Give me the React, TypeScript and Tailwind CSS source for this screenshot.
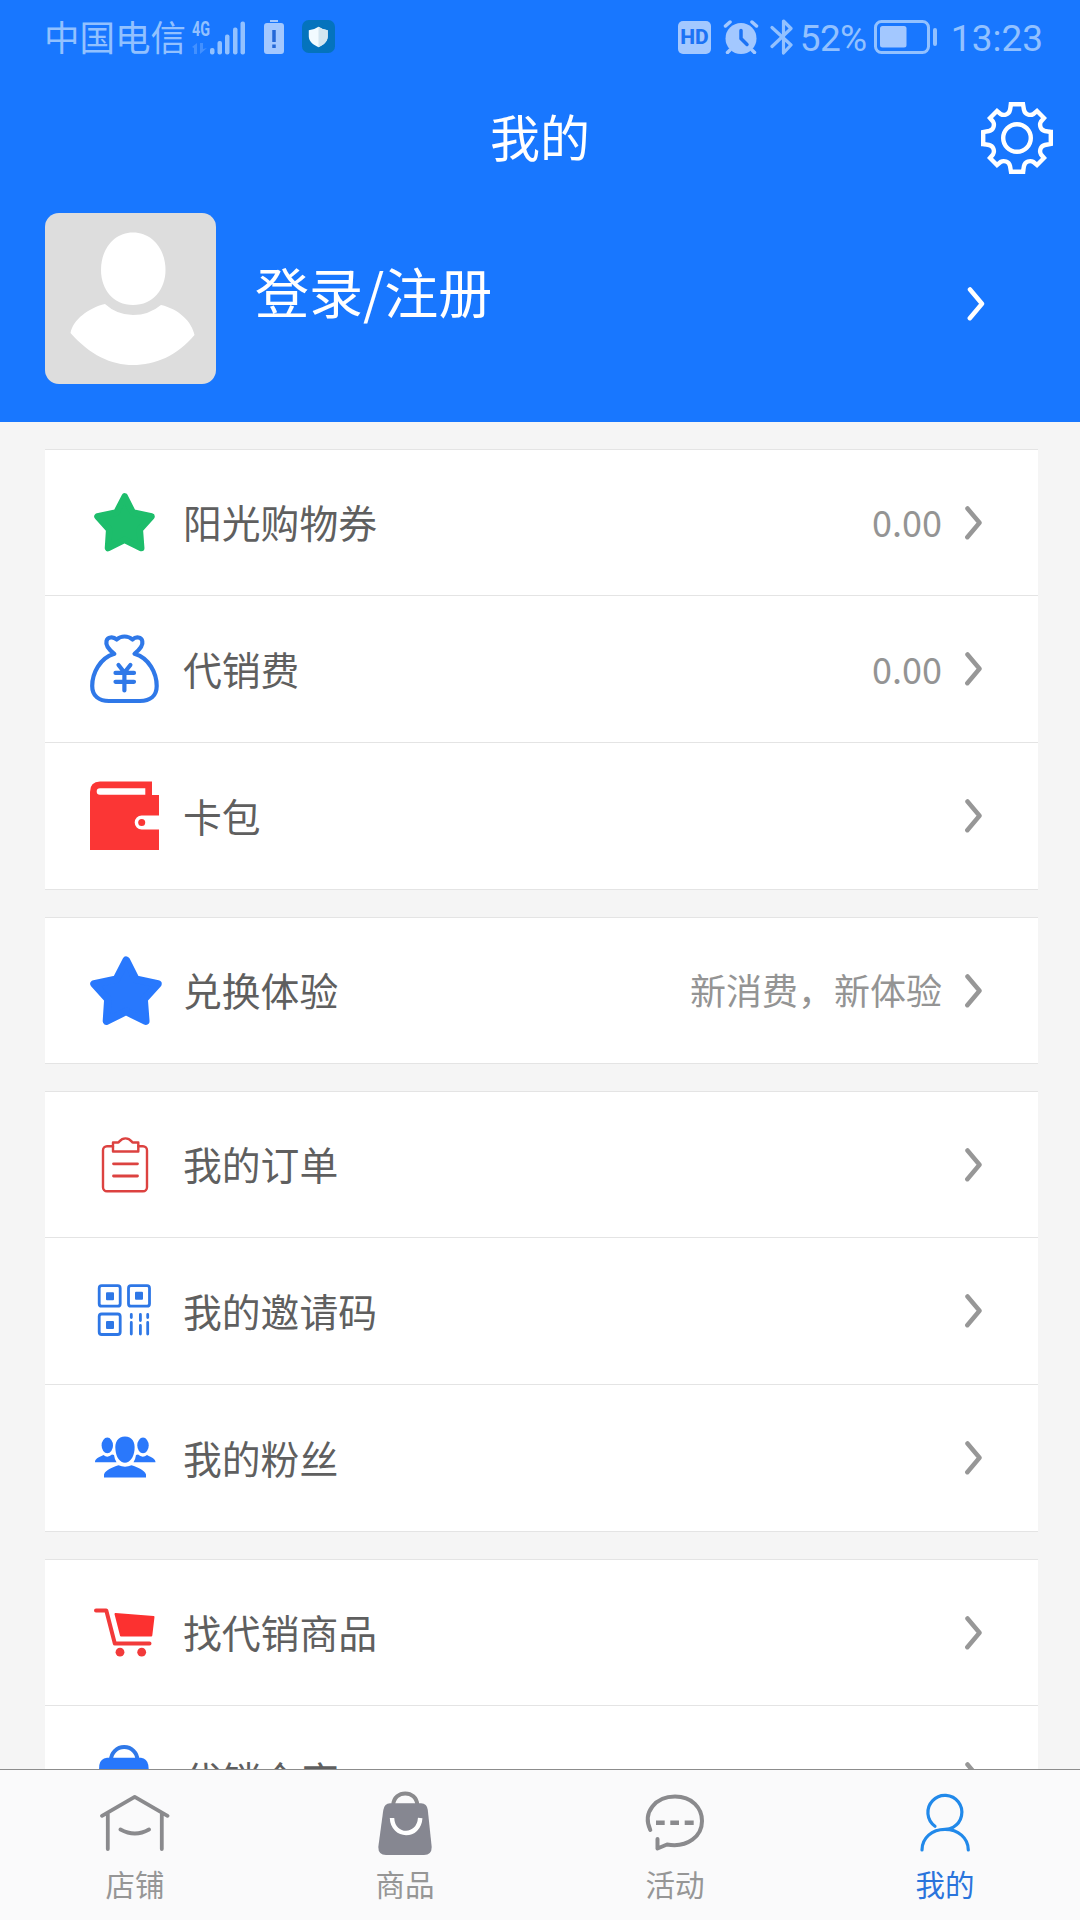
import React from "react";

type RowItem = {
  label: string;
  icon: React.ReactNode;
  value?: string;
};

const Star = ({ className }: { className: string }) => (
  <svg viewBox="4 5 61 59" className={className} fill="currentColor" stroke="currentColor" strokeWidth="6.5" strokeLinejoin="round">
    <path d="M34.7 8.5L42.8 24.5L61.5 28.5L49.8 41.5L51.2 60L34.5 51.8L18 60L19.2 41.5L7.5 28.5L26.4 24.5Z" />
  </svg>
);

const MoneyBag = () => (
  <svg viewBox="0 0 70 70" className="size-[70px] shrink-0 text-[#2f78e8]" fill="none" stroke="currentColor" strokeWidth="4.2" strokeLinecap="round" strokeLinejoin="round">
    <path d="M24.3 19.8C18 15 15.5 11 16.5 7C17.5 3 23 2.2 26.7 5.5C31 1.5 38 1.5 42.5 5.5C46 2.2 51.5 3 52.3 7C53.2 11 50.5 15 44.5 19.8C59 24 66.7 39 66.7 52C66.7 62 60 67 50 67H19C9 67 2.2 62 2.2 52C2.2 39 10 24 24.3 19.8" />
    <path d="M28.5 31L34.4 38.5L40.4 31M34.4 38.5V56.5M25.5 38.9H44M25.5 47.8H44" />
  </svg>
);

const Wallet = () => (
  <svg viewBox="0 0 70 70" className="size-[70px] shrink-0">
    <path fill="#fb3635" d="M0 11Q0 .5 10 .5H62V14H69V34.5H51.7A7 7 0 0 0 51.7 48.5H69V69H0Z" />
    <path fill="#fff" d="M10 7.2H55.3V13.8H10A3.3 3.3 0 0 1 10 7.2Z" />
    <circle cx="51.7" cy="41.5" r="3.5" fill="#fb3635" />
  </svg>
);

const Clipboard = () => (
  <svg viewBox="0 0 70 70" className="size-[70px] shrink-0 text-[#dc4240]" fill="none" stroke="currentColor" strokeWidth="2.4" strokeLinecap="round" strokeLinejoin="round">
    <path d="M23 16.2H17A4 4 0 0 0 13 20.2V57.2A4 4 0 0 0 17 61.2H53A4 4 0 0 0 57 57.2V20.2A4 4 0 0 0 53 16.2H48.3" />
    <path d="M23 12.5H28C29.5 12.5 30 8.4 35.5 8.4S41.5 12.5 43 12.5H48.3V21.5H23Z" />
    <path d="M23.5 33.8H47.5M23.5 46H47.5" strokeWidth="2.8" />
  </svg>
);

const QrCode = () => (
  <svg viewBox="0 0 70 70" className="size-[70px] shrink-0 text-[#2e77e6]" fill="none" stroke="currentColor" strokeWidth="2.8">
    <rect x="9.2" y="9.7" width="21" height="20.5" rx="2.5" />
    <rect x="38.5" y="9.7" width="21" height="20.5" rx="2.5" />
    <rect x="9.2" y="38" width="21" height="20.5" rx="2.5" />
    <g fill="currentColor" stroke="none">
      <rect x="16" y="16.3" width="8" height="8" rx="1" />
      <rect x="45" y="15.8" width="8" height="8" rx="1" />
      <rect x="16" y="45" width="8" height="8" rx="1" />
    </g>
    <path strokeLinecap="round" d="M41.3 38.5V41.5M41.3 46.5V58M50.4 38.5V44.5M50.4 49.5V58M57.7 38.5V41.5M57.7 46.5V58" />
  </svg>
);

const Fans = () => (
  <svg viewBox="0 0 70 70" className="size-[70px] shrink-0" fill="#2a78fb">
    <ellipse cx="17.3" cy="22.4" rx="5.7" ry="7.8" />
    <ellipse cx="53" cy="22.4" rx="5.7" ry="7.8" />
    <path d="M5 39.2C5 36 8 34.5 13.5 32Q17.5 35.5 22 31.5L24 32Q24.5 36 26.5 39.2Z" />
    <path d="M65.5 39.2C65.5 36 62 34.5 57 32Q52.5 35.5 48 31.5L46 32Q45.5 36 43.5 39.2Z" />
    <path d="M35 13.5C42 13.5 45.5 19 44.5 27C43.8 34 40 39.8 35 39.8S26 34 25.5 27C24.5 19 28 13.5 35 13.5Z" />
    <path d="M14 54.5V51.5C15.5 47 22 44.5 28.5 42.3Q35 45 41.5 42.3C48 44.5 54.5 47 56 51.5V54.5Z" />
  </svg>
);

const Cart = () => (
  <svg viewBox="0 0 70 70" className="size-[70px] shrink-0 text-[#f23a3a]">
    <path fill="none" stroke="currentColor" strokeWidth="4" strokeLinecap="round" strokeLinejoin="round" d="M6 12.6H16.3L24.8 45.4H59.5" />
    <path fill="#fc3130" stroke="#fc3130" strokeWidth="2" strokeLinejoin="round" d="M25.5 16L63.5 19L61.3 37.5H31Z" />
    <circle cx="30" cy="54.2" r="4.4" fill="currentColor" />
    <circle cx="51.7" cy="54.2" r="4.4" fill="currentColor" />
  </svg>
);

const Depot = () => (
  <svg viewBox="0 0 70 70" className="size-[70px] shrink-0">
    <path fill="none" stroke="#2f78e8" strokeWidth="4" d="M21 16A13.2 13 0 0 1 47.4 16" />
    <path fill="#2777fb" d="M17 13.8H51Q57 14.5 58.3 21L62 60Q62 67 55 67H14Q7 67 7 60L9.3 21Q10.5 14.500 17 13.8Z" />
  </svg>
);

const Chevron = ({ className }: { className: string }) => (
  <svg viewBox="0 0 17 34" className={className} fill="none" stroke="currentColor" strokeLinecap="round" strokeLinejoin="round">
    <path d="M2.5 2.500L14.500 16.800L2.300 31.200" />
  </svg>
);

const groups: RowItem[][] = [
  [
    { label: "阳光购物券", icon: <Star className="w-[61px] h-[59px] shrink-0 mr-[2px] text-[#1dbd6b]" />, value: "0.00" },
    { label: "代销费", icon: <MoneyBag />, value: "0.00" },
    { label: "卡包", icon: <Wallet /> },
  ],
  [{ label: "兑换体验", icon: <Star className="w-[72px] h-[70px] shrink-0 ml-[2px] text-[#2878fd]" />, value: "新消费，新体验" }],
  [
    { label: "我的订单", icon: <Clipboard /> },
    { label: "我的邀请码", icon: <QrCode /> },
    { label: "我的粉丝", icon: <Fans /> },
  ],
  [
    { label: "找代销商品", icon: <Cart /> },
    { label: "代销仓库", icon: <Depot /> },
  ],
];

const tabs = [
  {
    label: "店铺",
    active: false,
    icon: (
      <path strokeWidth="3.8" d="M2 27.8L34.7 8.8L67.5 27.8M7.8 26V61M61.8 26V61M20.5 41.5Q35 49.5 49 41.5" />
    ),
  },
  {
    label: "商品",
    active: false,
    icon: (
      <>
        <path strokeWidth="4" d="M23.2 17C24 1.5 46.5 1.5 47.3 17" />
        <path fill="#868791" stroke="none" d="M20 15.3H51Q57 15.5 57.8 22L61.7 59Q61.7 67 54 67H16Q8.3 67 8.3 59L13.3 22Q14.5 15.5 20 15.3Z" />
        <path stroke="#fff" strokeWidth="4.5" strokeLinecap="butt" d="M22 30C23 50 49 50 50.2 30" />
      </>
    ),
  },
  {
    label: "活动",
    active: false,
    icon: (
      <>
        <path strokeWidth="4" d="M10.3 42C2 24 16 8.600 35 8.600C52 8.600 62 20 62 33C62 48 48 60 27 56.500L17.500 60.500V51" />
        <path strokeWidth="4.500" strokeLinecap="butt" d="M16 34.700H24.700M30.300 34.700H39M44.700 34.700H53.700" />
      </>
    ),
  },
  {
    label: "我的",
    active: true,
    icon: (
      <path strokeWidth="3.2" d="M25 38.2A17 17 0 1 1 43 39.3Q40 41.3 35 41.3C22 41.3 12 50 12 62M35 41.3C48 41.3 58.3 50 58.3 62" />
    ),
  },
];

const StatusBar = () => (
  <div className="h-[75px] shrink-0 flex items-center justify-between pl-[44px] pr-[37px] text-[#92c1ff]">
    <div className="flex items-center">
      <span className="text-[35.5px] leading-none w-[146px] pb-[3px] whitespace-nowrap">中国电信</span>
      <svg viewBox="0 0 56 36" className="w-[56px] h-[36px] overflow-visible" fill="currentColor">
        <text x="2" y="15.500" fontSize="20" fontWeight="700" textLength="18" lengthAdjust="spacingAndGlyphs" className="font-['Roboto',sans-serif]">4G</text>
        <path opacity=".35" d="M2 27L7 23V34H4V28ZM10 23H13V29L17 28L10 34Z" />
        <rect x="20" y="28" width="4.5" height="6.5" rx="2" />
        <rect x="27.5" y="21" width="4.5" height="13.5" rx="2" />
        <rect x="35" y="14.5" width="4.5" height="20" rx="2" />
        <rect x="43" y="7.5" width="4.5" height="27" rx="2" />
        <rect x="50.5" y="1.5" width="4.5" height="33" rx="2" />
      </svg>
      <svg viewBox="0 0 20 34" className="w-[20px] h-[34px] ml-[18px] mb-[2px]">
        <path fill="#a3c8ff" d="M6 0H14V2H6ZM3 3H17Q20 3 20 6V31Q20 34 17 34H3Q0 34 0 31V6Q0 3 3 3Z" />
        <path stroke="#2468d8" strokeWidth="3.5" d="M10 10V22M10 24.5V28" />
      </svg>
      <svg viewBox="0 0 34 34" className="size-[33px] ml-[18px] mb-[2px]">
        <rect width="34" height="34" rx="7" fill="#0473bd" />
        <path fill="#f2fbff" d="M17 7Q21 10 26.5 10.5V17C26.5 22 22 26 17 28C12 26 7 22 7 17V10.5Q13 10 17 7Z" />
        <path fill="#d3e6f0" d="M17 7Q21 10 26.5 10.5V17C26.5 22 22 26 17 28Z" />
      </svg>
    </div>
    <div className="flex items-center font-['Roboto','Noto_Sans_CJK_SC',sans-serif] pb-px">
      <span className="w-[33px] h-[33px] rounded-[5px] bg-[#a3c8ff] text-[#1c73f5] text-[21px] leading-none font-extrabold flex items-center justify-center">HD</span>
      <svg viewBox="0 0 36 34" className="w-[36px] h-[34px] ml-[12px]" fill="none" stroke="#a3c8ff" strokeLinecap="round">
        <circle cx="18" cy="18.5" r="15.5" fill="#a3c8ff" stroke="none" />
        <path strokeWidth="3.5" d="M2.5 6L7 2M33.5 6L29 2M7 30L4.5 32.5M29 30L31.5 32.5" />
        <path stroke="#1c73f5" strokeWidth="3.5" d="M18 10.5V18.5L24 24.5" />
      </svg>
      <svg viewBox="0 0 23 36" className="w-[23px] h-[36px] ml-[11px]" fill="none" stroke="currentColor" strokeWidth="3.2" strokeLinejoin="round" strokeLinecap="round">
        <path d="M2 8.5L21 26L13.5 34V2L21 9.5L2 27.5" />
      </svg>
      <span className="text-[37px] leading-none ml-[7px] w-[74px] pt-[3px] whitespace-nowrap tracking-[-0.7px]">52%</span>
      <svg viewBox="0 0 64 34" className="w-[64px] h-[34px]">
        <rect x="1.5" y="1.5" width="53" height="31" rx="6" fill="none" stroke="currentColor" strokeWidth="3" />
        <rect x="6" y="6" width="26.5" height="21.5" rx="2.5" fill="#a3c8ff" />
        <rect x="59" y="8" width="4" height="18" rx="2" fill="currentColor" />
      </svg>
      <span className="text-[37px] leading-none ml-[13px] pt-[3px]">13:23</span>
    </div>
  </div>
);

const App = () => {
  return (
    <div className="w-[1080px] h-[1920px] flex flex-col overflow-hidden bg-[#f5f5f5] font-['Noto_Sans_CJK_SC',sans-serif]">
      <header className="h-[422px] shrink-0 flex flex-col bg-[#1877ff] text-white">
        <StatusBar />

        <div className="h-[126px] grid grid-cols-3 items-center px-[27px] pb-px">
          <span />
          <h1 className="text-[50px] leading-none text-center pb-[6px]">我的</h1>
          <svg viewBox="0 0 72 72" className="size-[72px] justify-self-end" fill="none" stroke="currentColor" strokeWidth="4.4">
            {[0, 90, 180, 270].map((deg) => (
              <path key={deg} transform={`rotate(${deg} 36 36)`} strokeLinecap="square" d="M30 2.200H42L43 8C44 12.500 49 14 52.500 12L56 9L63 16L60 19.500C58 23 59.500 28 64 29L69.800 30" />
            ))}
            <circle cx="36" cy="36" r="13.8" />
          </svg>
        </div>

        <div className="flex pt-3 pl-[45px] pr-[95px]">
          <svg viewBox="0 0 171 171" className="size-[171px] rounded-[14px] bg-[#dddddd]" fill="#fff">
            <path d="M88 19.500C107 19.500 120.500 36 120.500 57C120.500 76 108 92 88 92S56 76 56 57C56 36 69 19.500 88 19.500Z" />
            <path d="M60 91Q72 102 88 102T116 92C134 96 147 109 149.500 122C132 143 110 152 88 152S45 142 25.500 120C28 107 43 95 60 91Z" />
          </svg>
          <span className="ml-[39px] mt-[51px] text-[54px] leading-none">登录/注册</span>
          <Chevron className="w-[18px] h-[34px] ml-auto mt-[74px] stroke-[4.5]" />
        </div>
      </header>

      <main className="flex-1 min-h-0 overflow-hidden flex flex-col gap-[27px] pt-[27px] pl-[45px] pr-[42px]">
        {groups.map((items, i) => (
          <section key={i} className="shrink-0 bg-white">
            {items.map((item) => (
              <div key={item.label} className="h-[147px] flex items-center border-b first:border-t border-[#e4e4e4] pl-[45px] pr-[56px]">
                <div className="w-[70px] shrink-0 flex justify-center">{item.icon}</div>
                <span className="ml-[23px] pb-[2px] text-[38.8px] leading-none text-[#5f5f5f]">{item.label}</span>
                <span className="ml-auto pb-[3px] text-[36px] leading-none text-[#949494]">{item.value}</span>
                <Chevron className="w-[17px] h-[34px] ml-[23px] shrink-0 stroke-[4.5] text-[#979797]" />
              </div>
            ))}
          </section>
        ))}
      </main>

      <nav className="h-[151px] shrink-0 grid grid-cols-4 border-t border-[#8c8c8c] bg-[#fafafb]">
        {tabs.map((tab) => (
          <div key={tab.label} className={`flex flex-col items-center pt-[18px] ${tab.active ? "text-[#2a74dc]" : "text-[#969696]"}`}>
            <svg viewBox="0 0 70 70" className="size-[70px]" fill="none" stroke={tab.active ? "#2189ea" : "#8a8a8d"} strokeLinecap="round" strokeLinejoin="round">
              {tab.icon}
            </svg>
            <span className="mt-[11px] text-[29.5px] leading-none">{tab.label}</span>
          </div>
        ))}
      </nav>
    </div>
  );
};

export default App;
